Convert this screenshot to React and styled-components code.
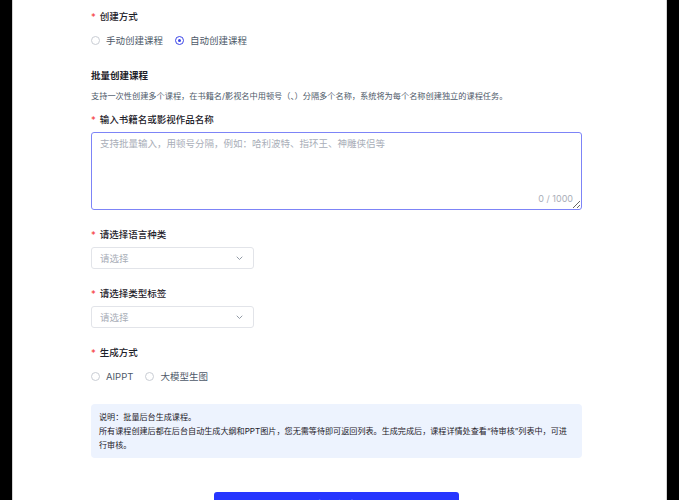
import React, { useState } from 'react';
import styled, { createGlobalStyle } from 'styled-components';

const GlobalStyle = createGlobalStyle`
  html, body {
    margin: 0;
    padding: 0;
    background: #000;
    height: 100%;
    overflow: hidden;
  }
  body {
    font-family: "Inter", "Noto Sans CJK SC", sans-serif;
  }
`;

const Panel = styled.div`
  margin: 0 12px;
  height: 500px;
  background: #fff;
  border-left: 1px solid #d4d4d4;
  border-right: 1px solid #d4d4d4;
  overflow: hidden;
`;

const Content = styled.div`
  width: 491px;
  margin-left: 78px;
  padding-top: 10px;
`;

const FormItem = styled.div`
  margin-bottom: ${(p) => p.$gap ?? 18}px;
`;

const Label = styled.div`
  font-size: 9.5px;
  line-height: 14px;
  font-weight: 500;
  color: #1d2129;
  margin-bottom: 5px;
  display: flex;
  align-items: center;

  &::before {
    content: '*';
    color: #f53f3f;
    margin-right: 4px;
    font-weight: 400;
  }
`;

const RadioGroup = styled.div`
  display: flex;
  align-items: center;
  height: 22px;
  gap: 12px;
`;

const RadioOption = styled.label`
  display: flex;
  align-items: center;
  gap: 6px;
  font-size: 9.5px;
  color: #4e5969;
  cursor: pointer;
`;

const RadioDot = styled.span`
  width: 9px;
  height: 9px;
  box-sizing: border-box;
  border-radius: 50%;
  border: 1px solid ${(p) => (p.$checked ? '#3b45e8' : '#c9cdd4')};
  display: flex;
  align-items: center;
  justify-content: center;

  &::after {
    content: '';
    width: 3px;
    height: 3px;
    border-radius: 50%;
    background: ${(p) => (p.$checked ? '#3b45e8' : 'transparent')};
  }
`;

const SectionTitle = styled.div`
  font-size: 9.5px;
  line-height: 14px;
  font-weight: 700;
  color: #1d2129;
  margin-bottom: 6px;
`;

const SectionDesc = styled.div`
  font-size: 8.2px;
  line-height: 14px;
  color: #4e5969;
  margin-bottom: 10px;
`;

const TextareaWrap = styled.div`
  position: relative;
`;

const TextArea = styled.textarea`
  display: block;
  width: 491px;
  height: 78px;
  box-sizing: border-box;
  border: 1px solid #7d84f7;
  border-radius: 3px;
  padding: 4px 8px;
  font-family: inherit;
  font-size: 9.5px;
  line-height: 14px;
  color: #1d2129;
  outline: none;

  &::placeholder {
    color: #a9aeb8;
  }
`;

const Counter = styled.span`
  position: absolute;
  right: 9px;
  bottom: 6px;
  font-size: 9px;
  color: #a9aeb8;
`;

const SelectBox = styled.div`
  width: 163px;
  height: 22px;
  box-sizing: border-box;
  border: 1px solid #e2e4e9;
  border-radius: 3px;
  display: flex;
  align-items: center;
  justify-content: space-between;
  padding: 0 10px 0 8px;
  font-size: 9.5px;
  color: #a9aeb8;
  cursor: pointer;
`;

const Note = styled.div`
  background: #edf3fe;
  border-radius: 4px;
  padding: 6px 8px;
  font-size: 8.1px;
  line-height: 14px;
  color: #1d2129;
`;

const SubmitRow = styled.div`
  display: flex;
  justify-content: center;
  margin-top: 34px;
`;

const SubmitButton = styled.button`
  width: 245px;
  height: 24px;
  padding: 0;
  border: none;
  border-radius: 3px;
  background: #2636ff;
  color: #fff;
  font-family: inherit;
  font-size: 9.5px;
  font-weight: 500;
  cursor: pointer;
`;

const Chevron = () => (
  <svg width="7" height="5" viewBox="0 0 7 5" fill="none">
    <path d="M1 1l2.5 2.5L6 1" stroke="#86909c" strokeWidth="0.9" strokeLinecap="round" strokeLinejoin="round" />
  </svg>
);

const Radio = ({ checked, onClick, children }) => (
  <RadioOption onClick={onClick}>
    <RadioDot $checked={checked} />
    {children}
  </RadioOption>
);

const Select = ({ placeholder }) => (
  <SelectBox>
    <span>{placeholder}</span>
    <Chevron />
  </SelectBox>
);

const App = () => {
  const [mode, setMode] = useState('auto');
  const [gen, setGen] = useState('');
  const [text, setText] = useState('');

  return (
    <>
      <GlobalStyle />
      <Panel>
        <Content>
          <FormItem>
            <Label>创建方式</Label>
            <RadioGroup>
              <Radio checked={mode === 'manual'} onClick={() => setMode('manual')}>手动创建课程</Radio>
              <Radio checked={mode === 'auto'} onClick={() => setMode('auto')}>自动创建课程</Radio>
            </RadioGroup>
          </FormItem>

          <SectionTitle>批量创建课程</SectionTitle>
          <SectionDesc>
            支持一次性创建多个课程，在书籍名/影视名中用顿号（、）分隔多个名称，系统将为每个名称创建独立的课程任务。
          </SectionDesc>

          <FormItem>
            <Label>输入书籍名或影视作品名称</Label>
            <TextareaWrap>
              <TextArea
                placeholder="支持批量输入，用顿号分隔，例如：哈利波特、指环王、神雕侠侣等"
                value={text}
                maxLength={1000}
                onChange={(e) => setText(e.target.value)}
              />
              <Counter>{text.length} / 1000</Counter>
            </TextareaWrap>
          </FormItem>

          <FormItem>
            <Label>请选择语言种类</Label>
            <Select placeholder="请选择" />
          </FormItem>

          <FormItem>
            <Label>请选择类型标签</Label>
            <Select placeholder="请选择" />
          </FormItem>

          <FormItem $gap={17}>
            <Label>生成方式</Label>
            <RadioGroup>
              <Radio checked={gen === 'aippt'} onClick={() => setGen('aippt')}>AIPPT</Radio>
              <Radio checked={gen === 'llm'} onClick={() => setGen('llm')}>大模型生图</Radio>
            </RadioGroup>
          </FormItem>

          <Note>
            说明：批量后台生成课程。
            <br />
            所有课程创建后都在后台自动生成大纲和PPT图片，您无需等待即可返回列表。生成完成后，课程详情处查看“待审核”列表中，可进行审核。
          </Note>

          <SubmitRow>
            <SubmitButton type="button">批量创建</SubmitButton>
          </SubmitRow>
        </Content>
      </Panel>
    </>
  );
};

export default App;
